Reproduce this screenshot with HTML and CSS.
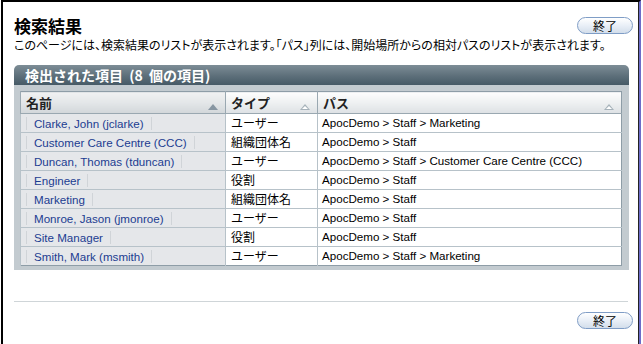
FILE: index.html
```html
<!DOCTYPE html>
<html lang="ja">
<head>
<meta charset="utf-8">
<title>検索結果</title>
<link rel="stylesheet" href="styles.css">
</head>
<body>
<div class="frame">
  <div class="head">
    <div class="titles">
      <h1 class="title">検索結果</h1>
      <p class="desc">このページには、検索結果のリストが表示されます。「パス」列には、開始場所からの相対パスのリストが表示されます。</p>
    </div>
    <button class="btn btn-top" type="button">終了</button>
  </div>

  <section class="panel">
    <div class="panel-head">検出された項目 (8 個の項目)</div>
    <div class="panel-body">
      <table class="results">
        <thead>
          <tr>
            <th class="col-name sorted">名前<span class="tri tri-filled"></span></th>
            <th class="col-type">タイプ<span class="tri"></span></th>
            <th class="col-path">パス<span class="tri"></span></th>
          </tr>
        </thead>
        <tbody>
          <tr><td class="name"><a class="lnk">Clarke, John (jclarke)</a></td><td class="type">ユーザー</td><td class="path">ApocDemo &gt; Staff &gt; Marketing</td></tr>
          <tr><td class="name"><a class="lnk">Customer Care Centre (CCC)</a></td><td class="type">組織団体名</td><td class="path">ApocDemo &gt; Staff</td></tr>
          <tr><td class="name"><a class="lnk">Duncan, Thomas (tduncan)</a></td><td class="type">ユーザー</td><td class="path">ApocDemo &gt; Staff &gt; Customer Care Centre (CCC)</td></tr>
          <tr><td class="name"><a class="lnk">Engineer</a></td><td class="type">役割</td><td class="path">ApocDemo &gt; Staff</td></tr>
          <tr><td class="name"><a class="lnk">Marketing</a></td><td class="type">組織団体名</td><td class="path">ApocDemo &gt; Staff</td></tr>
          <tr><td class="name"><a class="lnk">Monroe, Jason (jmonroe)</a></td><td class="type">ユーザー</td><td class="path">ApocDemo &gt; Staff</td></tr>
          <tr><td class="name"><a class="lnk">Site Manager</a></td><td class="type">役割</td><td class="path">ApocDemo &gt; Staff</td></tr>
          <tr><td class="name"><a class="lnk">Smith, Mark (msmith)</a></td><td class="type">ユーザー</td><td class="path">ApocDemo &gt; Staff &gt; Marketing</td></tr>
        </tbody>
      </table>
    </div>
  </section>

  <hr class="sep">
  <div class="foot">
    <button class="btn" type="button">終了</button>
  </div>
</div>
</body>
</html>
```

FILE: styles.css
```css
* { box-sizing: border-box; }

html, body {
  margin: 0;
  padding: 0;
  background: #fff;
}

body {
  width: 643px;
  height: 344px;
  overflow: hidden;
  font-family: "Noto Sans CJK JP", "Liberation Sans", sans-serif;
  color: #000;
}

.frame {
  margin-left: 1px;
  width: 640px;
  height: 344px;
  border-top: 2px solid #000;
  border-left: 2px solid #000;
  border-right: 2px solid #6c6cc8;
  box-shadow: inset -1px 0 0 #222;
  padding: 0 6px 0 11px;
}

.head {
  display: flex;
  justify-content: space-between;
  align-items: flex-start;
  padding-top: 12px;
}

.titles {
  flex: 1 1 auto;
  min-width: 0;
}

.title {
  margin: 0;
  font-size: 17px;
  line-height: 23px;
  font-weight: bold;
}

.desc {
  margin: 0;
  font-size: 12px;
  line-height: 16px;
  font-feature-settings: "palt";
  white-space: nowrap;
}

.btn {
  flex: 0 0 56px;
  width: 56px;
  height: 17px;
  padding: 0;
  border: 1px solid #7f9dc6;
  border-radius: 9px;
  background: linear-gradient(#ffffff, #e9eff7 50%, #d3deeb);
  font-family: "Noto Sans CJK JP", sans-serif;
  font-size: 12px;
  line-height: 15px;
  color: #000;
}

.btn-top {
  margin-top: 3px;
}

.panel {
  width: 615px;
  margin-top: 12px;
}

.panel-head {
  height: 20px;
  border-radius: 5px 5px 0 0;
  background: linear-gradient(#7d8d96, #5d6f7a 55%, #465a66);
  color: #fff;
  font-weight: bold;
  font-size: 14px;
  line-height: 20px;
  padding-left: 11px;
  word-spacing: 3px;
}

.panel-body {
  background: #c3cbd0;
  padding: 6px 7px 4px 6px;
}

.results {
  width: 100%;
  border-collapse: collapse;
  border: 1px solid #8e9da7;
  background: #fff;
  font-family: "Liberation Sans", "Noto Sans CJK JP", sans-serif;
  font-size: 11.6px;
}

.results th {
  position: relative;
  height: 22px;
  padding: 0 0 0 5px;
  text-align: left;
  font-family: "Noto Sans CJK JP", sans-serif;
  font-size: 13px;
  font-weight: bold;
  color: #222;
  background: linear-gradient(#fdfdfd, #eef0f1 50%, #dde1e4);
  border-left: 1px solid #9aa8b1;
  border-bottom: 1px solid #9aa8b1;
}

.results th.sorted {
  background: linear-gradient(#f0f1f2, #e3e6e8 50%, #d2d7da);
}

.col-name { width: 205px; }
.col-type { width: 92px; }

.tri {
  position: absolute;
  right: 7px;
  top: 12px;
  width: 10px;
  height: 6px;
}

.tri::before {
  content: "";
  position: absolute;
  left: 0;
  top: 0;
  border-left: 5px solid transparent;
  border-right: 5px solid transparent;
  border-bottom: 6px solid #a6b2ba;
}

.tri::after {
  content: "";
  position: absolute;
  left: 2px;
  top: 2px;
  border-left: 3px solid transparent;
  border-right: 3px solid transparent;
  border-bottom: 3px solid #fff;
}

.tri-filled::before {
  border-bottom-color: #8796a2;
}

.tri-filled::after {
  display: none;
}

.results td {
  height: 19px;
  padding: 0;
  border-top: 1px solid #b7c2c9;
  border-left: 1px solid #b7c2c9;
  line-height: 18px;
  white-space: nowrap;
}

.results td.name {
  background: #e5e7ea;
  padding-left: 5px;
}

.lnk {
  display: inline-block;
  vertical-align: middle;
  padding: 0 7px;
  line-height: 13px;
  border-left: 1px solid #d0d4d8;
  border-right: 1px solid #d0d4d8;
  color: #1b3c91;
  text-decoration: none;
}

.results td.type {
  padding-left: 5px;
  font-family: "Noto Sans CJK JP", sans-serif;
  font-size: 12px;
}

.results td.path {
  padding-left: 4px;
}

.sep {
  width: 614px;
  margin: 31px 0 0 0;
  border: 0;
  border-top: 1px solid #cfd5d8;
  height: 0;
}

.foot {
  display: flex;
  justify-content: flex-end;
  padding-top: 10px;
}
```
